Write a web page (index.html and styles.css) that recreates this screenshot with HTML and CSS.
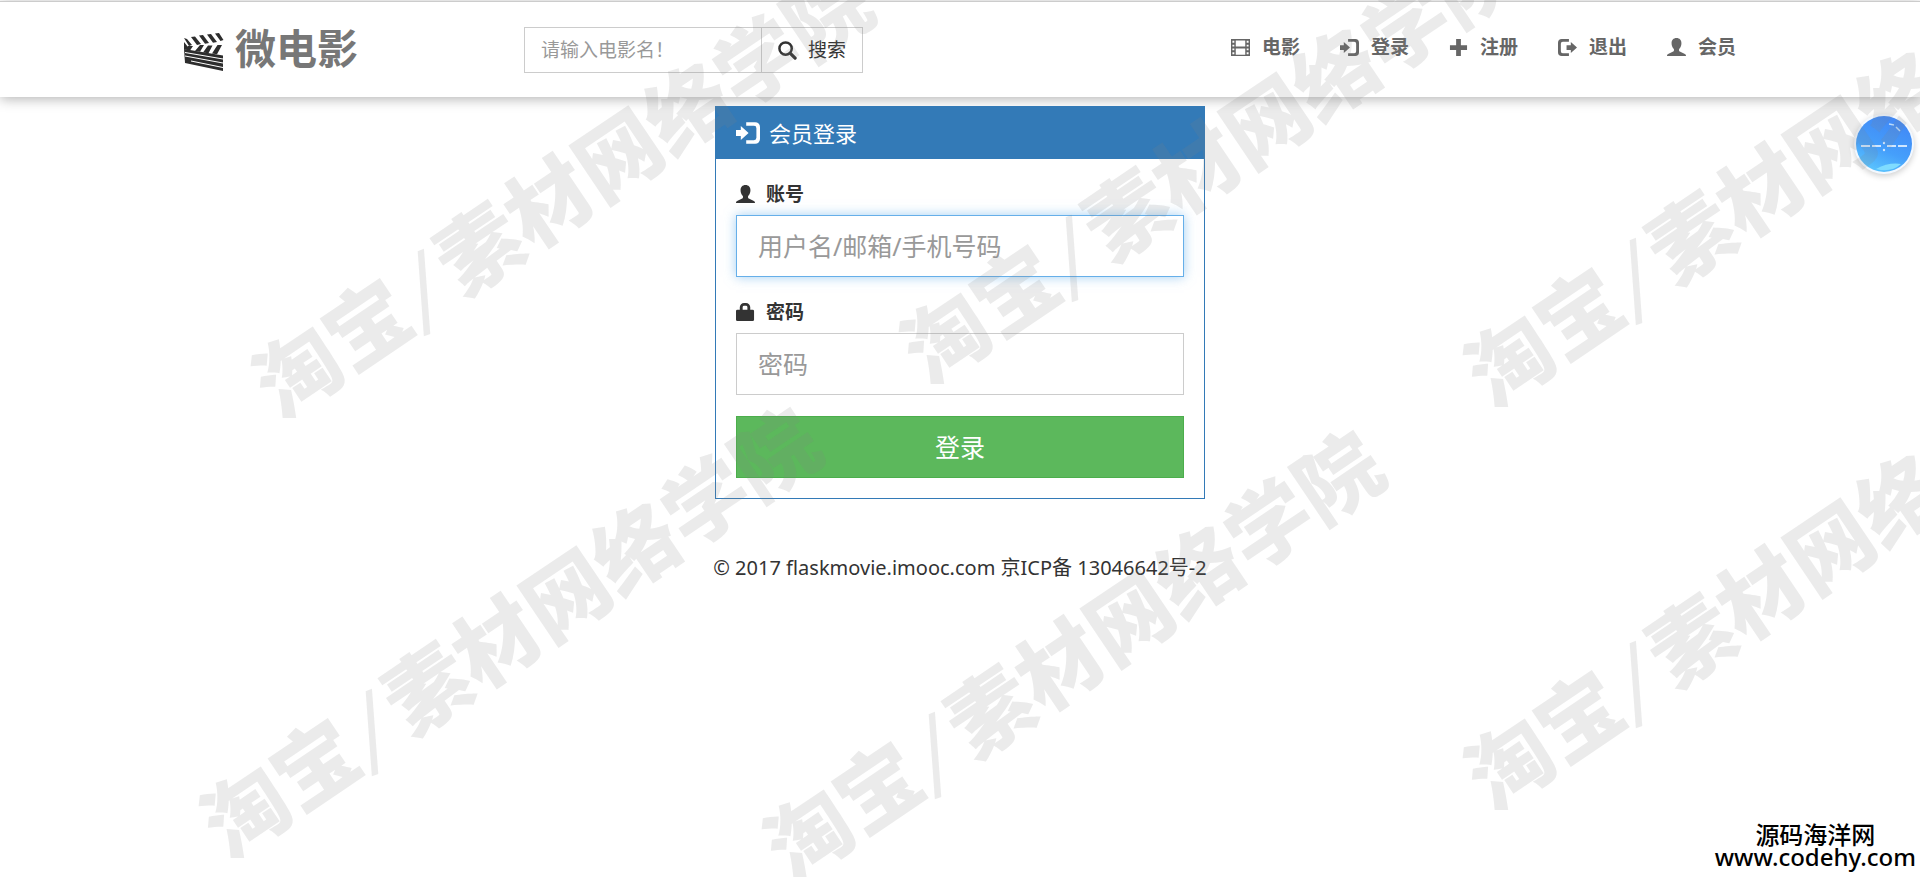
FILE: index.html
```html
<!DOCTYPE html>
<html lang="zh-CN">
<head>
<meta charset="utf-8">
<meta name="viewport" content="width=device-width, initial-scale=1">
<title>微电影 - 会员登录</title>
<link rel="stylesheet" href="styles.css">
</head>
<body>
<svg class="sprite" aria-hidden="true">
  <symbol id="i-film" viewBox="0 0 20 20"><path fill-rule="evenodd" d="M0 1h20v18H0zM1.500 3v2h2V3zM1.500 7v2h2V7zM1.500 11v2h2v-2zM1.500 15v2h2v-2zM16.500 3v2h2V3zM16.500 7v2h2V7zM16.500 11v2h2v-2zM16.500 15v2h2v-2zM5 2.500V9h10V2.500zM5 11v6.500h10V11z"/></symbol>
  <symbol id="i-in" viewBox="0 0 20 20"><path d="M0 7.500h4V4.200L10.500 10 4 15.800V12.500H0z"/><path d="M8.500 1H16a4 4 0 0 1 4 4v10a4 4 0 0 1-4 4H8.500v-3H15a2 2 0 0 0 2-2V6a2 2 0 0 0-2-2H8.500z"/></symbol>
  <symbol id="i-plus" viewBox="0 0 20 20"><path d="M7.500 1h5v6.500H19v5h-6.500V19h-5v-6.500H1v-5h6.500z"/></symbol>
  <symbol id="i-out" viewBox="0 0 20 20"><path d="M9 7.500h4.500V4.200L20 10l-6.500 5.800V12.500H9z"/><path d="M11.500 1H4a4 4 0 0 0-4 4v10a4 4 0 0 0 4 4h7.500v-3H5a2 2 0 0 1-2-2V6a2 2 0 0 1 2-2h6.500z"/></symbol>
  <symbol id="i-user" viewBox="0 0 20 20"><path d="M10 0c3.300 0 5.200 2.200 5.200 5.500 0 2.500-1 4.800-2.500 6v1.700c0 .8.500 1.100 1.300 1.400l4.300 1.900c1.200.5 1.700 1.100 1.700 2.200V19H0v-.3c0-1.100.5-1.700 1.700-2.200L6 14.600c.8-.3 1.300-.6 1.300-1.400v-1.700c-1.500-1.200-2.500-3.500-2.500-6C4.800 2.200 6.700 0 10 0z"/></symbol>
  <symbol id="i-lock" viewBox="0 0 20 20"><path fill-rule="evenodd" d="M4 7V4.500A4.500 4.500 0 0 1 8.500 0h2A4.500 4.500 0 0 1 15 4.500V7h2.500A1.500 1.500 0 0 1 19 8.500v9a1.500 1.500 0 0 1-1.500 1.500h-16A1.500 1.500 0 0 1 0 17.500v-9A1.500 1.500 0 0 1 1.500 7zM7 7h5V4.500A1.500 1.500 0 0 0 10.500 3h-2A1.500 1.500 0 0 0 7 4.500z"/></symbol>
  <symbol id="i-search" viewBox="0 0 20 20"><circle cx="8" cy="8" r="6.500" fill="none" stroke="currentColor" stroke-width="2.600"/><path d="M13 13l5 5" stroke="currentColor" stroke-width="3.400" stroke-linecap="round"/></symbol>
</svg>

<header class="site-header">
  <div class="header-inner">
    <a class="brand" href="#">
      <svg class="brand-icon" viewBox="0 0 40 38" aria-hidden="true">
        <path d="M0 16l39 6.500V38L1 30z"/>
        <path class="cut" d="M1 19.500l38 6.500M1 23l38 7M7 28l32 6.500"/>
        <path d="M0 5l3 1 5 6-3 1zM7 4l4-.5 6 7.500-4 1zM15 2.500l4-.5 6 8-4 .8zM23 1.500l4-.5 6 8-4 .8zM31 .5l4-.5 4.500 7-3 1zM3 17l1-4h5l-3 4.500zM11 18l5-6h4l-4 6.800zM19 19.500l5-7h4.500l-4 7.800zM28 20.500l5.500-8.500H38l-5 9.300zM0 9l4 5-1 3-3-1z"/>
      </svg>
      <span>微电影</span>
    </a>
    <form class="search">
      <input class="search-input" type="text" placeholder="请输入电影名！" aria-label="请输入电影名">
      <button class="search-button" type="button"><svg class="icon" aria-hidden="true"><use href="#i-search"/></svg>搜索</button>
    </form>
    <nav class="nav">
      <a href="#"><svg class="icon" aria-hidden="true"><use href="#i-film"/></svg>电影</a>
      <a href="#"><svg class="icon" aria-hidden="true"><use href="#i-in"/></svg>登录</a>
      <a href="#"><svg class="icon" aria-hidden="true"><use href="#i-plus"/></svg>注册</a>
      <a href="#"><svg class="icon" aria-hidden="true"><use href="#i-out"/></svg>退出</a>
      <a href="#"><svg class="icon" aria-hidden="true"><use href="#i-user"/></svg>会员</a>
    </nav>
  </div>
</header>

<main class="panel">
  <h1 class="panel-heading"><svg class="icon" aria-hidden="true"><use href="#i-in"/></svg>会员登录</h1>
  <form class="panel-body">
    <label class="label" for="account"><svg class="icon" aria-hidden="true"><use href="#i-user"/></svg>账号</label>
    <input class="field field-active" id="account" type="text" placeholder="用户名/邮箱/手机号码">
    <label class="label" for="password"><svg class="icon" aria-hidden="true"><use href="#i-lock"/></svg>密码</label>
    <input class="field" id="password" type="password" placeholder="密码">
    <button class="submit" type="button">登录</button>
  </form>
</main>

<footer class="footer">© 2017 flaskmovie.imooc.com 京ICP备 13046642号-2</footer>

<div class="ball">
  <svg viewBox="0 0 56 56" aria-hidden="true">
    <defs><linearGradient id="g" x1=".7" y1="0" x2=".3" y2="1"><stop offset="0" stop-color="#4186f5"/><stop offset=".6" stop-color="#459ffb"/><stop offset="1" stop-color="#5cc6fd"/></linearGradient></defs>
    <circle cx="28" cy="28" r="28" fill="url(#g)"/>
    <path d="M20 53q13-7 25-5-10 9-25 5z" fill="#7fdcff"/>
    <path d="M33 8l5 1M40 11l4 4" stroke="#b9dcff" stroke-width="1.500"/>
    <path d="M5 30h9M16 30h9M31 30h9M42 30h9" stroke="#cfe6ff" stroke-width="2"/>
    <circle cx="28" cy="27" r="1.200" fill="#cfe6ff"/><circle cx="28" cy="34" r="1.200" fill="#cfe6ff"/>
  </svg>
</div>

<div class="source">源码海洋网<br>www.codehy.com</div>

<div class="marks" aria-hidden="true">
  <div class="mark mark-a">淘宝<i>/</i>素材网络学院</div>
  <div class="mark mark-b">淘宝<i>/</i>素材网络学院</div>
  <div class="mark mark-c">淘宝<i>/</i>素材网络学院</div>
  <div class="mark mark-d">淘宝<i>/</i>素材网络学院</div>
  <div class="mark mark-e">淘宝<i>/</i>素材网络学院</div>
  <div class="mark mark-f">淘宝<i>/</i>素材网络学院</div>
</div>
</body>
</html>
```
FILE: styles.css
```css
* { box-sizing: border-box; }

body {
  margin: 0;
  min-height: 100vh;
  position: relative;
  background: #fff;
  color: #333;
  font-family: "Noto Sans", "Noto Sans CJK SC", sans-serif;
  font-size: 19px;
  line-height: 28px;
}

input, button { font: inherit; color: inherit; border-radius: 0; margin: 0; }
input::placeholder { color: #999; opacity: 1; }
a { color: inherit; text-decoration: none; }

.sprite { position: absolute; width: 0; height: 0; }
.icon { width: 19px; height: 19px; flex: none; fill: currentColor; }

/* Header */
.site-header {
  margin-top: 1px;
  padding: 25px 0 24px;
  border-top: 1px solid #ccc;
  background: #fff;
  box-shadow: 0 2px 12px rgba(0, 0, 0, .3);
}
.header-inner {
  display: grid;
  grid-template-columns: 340px 339px 1fr;
  align-items: start;
  max-width: 1592px;
  margin: 0 auto;
  padding-left: 20px;
}
.brand {
  display: flex;
  gap: 11px;
  color: #777;
  font-size: 41px;
  font-weight: 700;
  line-height: 42px;
}
.brand-icon { width: 40px; height: 38px; margin-top: 6px; fill: #2d2d2d; }
.brand-icon .cut { fill: none; stroke: #fff; stroke-width: 1; }

.search { display: flex; height: 46px; }
.search-input {
  flex: 1;
  min-width: 0;
  padding: 0 16px;
  border: 1px solid #ccc;
  border-right: 0;
  background: #fff;
}
.search-button {
  display: flex;
  align-items: center;
  gap: 11px;
  padding: 0 16px;
  border: 1px solid #ccc;
  background: #fff;
}

.nav { display: flex; justify-content: flex-end; }
.nav a {
  display: flex;
  align-items: center;
  gap: 12px;
  padding: 0 20px;
  color: #666;
  font-weight: 700;
  line-height: 40px;
}

/* Login panel */
.panel {
  position: relative;
  width: 490px;
  max-width: 100%;
  margin: 9px auto 0;
  border: 1px solid #337ab7;
  background: #fff;
}
.panel-heading {
  display: flex;
  align-items: center;
  gap: 9px;
  margin: 0;
  padding: 12px 20px;
  background: #337ab7;
  color: #fff;
  font-size: 22px;
  font-weight: 400;
  line-height: 28px;
}
.panel-heading .icon { width: 24px; height: 24px; }
.panel-body { display: flex; flex-direction: column; padding: 21px 20px 20px; }
.label {
  display: flex;
  align-items: center;
  gap: 11px;
  margin-bottom: 7px;
  font-weight: 700;
}
.field {
  height: 62px;
  margin-bottom: 21px;
  padding: 0 21px;
  border: 1px solid #ccc;
  background: #fff;
  font-size: 25px;
}
.field-active {
  border-color: #66afe9;
  box-shadow: 0 0 11px rgba(102, 175, 233, .6);
}
.submit {
  height: 62px;
  border: 1px solid #4cae4c;
  background: #5cb85c;
  color: #fff;
  font-size: 25px;
}

.footer { margin-top: 55px; font-size: 20px; text-align: center; }

/* Overlays */
.ball {
  position: absolute;
  top: 114px;
  right: 6px;
  width: 60px;
  height: 60px;
  padding: 2px;
  border-radius: 50%;
  background: #f2f8ff;
  box-shadow: 0 2px 6px rgba(0, 0, 0, .2);
}
.ball svg { display: block; }

.source {
  position: absolute;
  right: 4px;
  bottom: 9px;
  color: #000;
  font-size: 24px;
  font-weight: 500;
  line-height: 22px;
  text-align: center;
}

.marks {
  position: absolute;
  inset: 0;
  overflow: hidden;
  pointer-events: none;
}
.mark {
  position: absolute;
  color: rgba(128, 128, 128, .16);
  font-family: "Noto Sans CJK SC", sans-serif;
  font-size: 84px;
  font-weight: 900;
  line-height: 84px;
  white-space: nowrap;
  transform: translate(-50%, -50%) rotate(-34deg);
}
.mark i {
  display: inline-block;
  padding: 0 9px;
  font-style: normal;
  font-weight: 500;
  transform: rotate(14deg);
}
.mark-a { left: 560px; top: 189px; }
.mark-b { left: 1208px; top: 155px; }
.mark-c { left: 1772px; top: 178px; }
.mark-d { left: 508px; top: 629px; }
.mark-e { left: 1071px; top: 652px; }
.mark-f { left: 1772px; top: 581px; }
```
